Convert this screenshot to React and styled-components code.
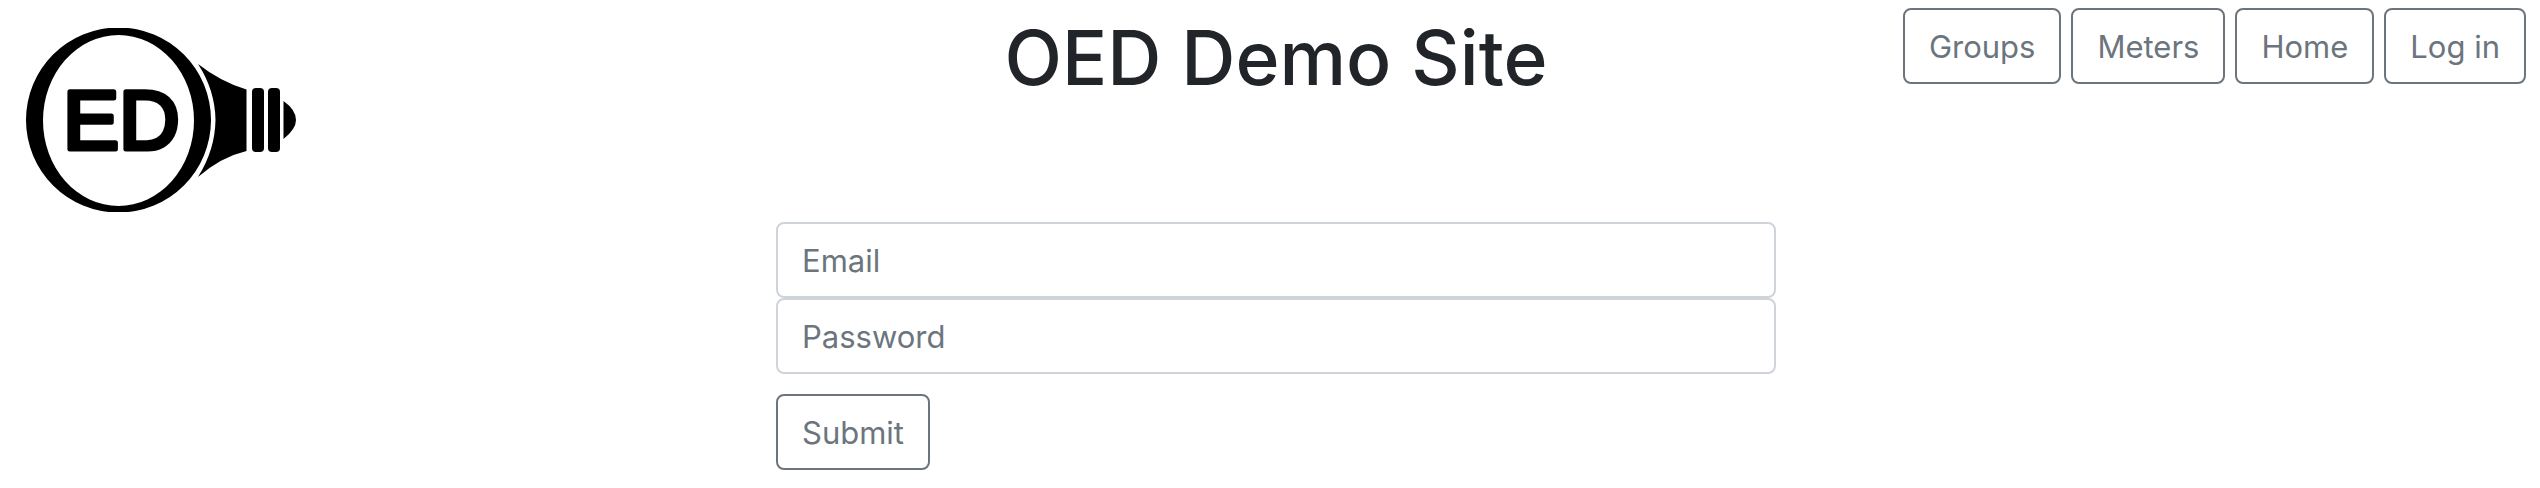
import React from 'react';
import styled, { createGlobalStyle } from 'styled-components';

const GlobalStyle = createGlobalStyle`
  *, *::before, *::after { box-sizing: border-box; }
  body {
    margin: 0;
    background: #fff;
    color: #212529;
    font-family: Inter, "Liberation Sans", sans-serif;
    font-size: 31px;
    line-height: 48px;
  }
`;

const Page = styled.div`
  padding: 8px 14px 18px 26px;
`;

const Header = styled.header`
  display: grid;
  grid-template-columns: 1fr auto 1fr;
  align-items: start;
`;

const LogoLink = styled.a`
  display: block;
  justify-self: start;
  margin-top: 20px;
`;

const LogoImage = styled.svg`
  display: block;
  width: 270px;
  height: 184px;
`;

const Title = styled.h1`
  margin: 0;
  font-size: 75px;
  line-height: 100px;
  font-weight: 500;
  white-space: nowrap;
`;

const Nav = styled.nav`
  display: flex;
  justify-content: flex-end;
  gap: 10px;
`;

const Button = styled.button`
  height: 76px;
  padding: 2px 24px 0;
  border: 2px solid #6c757d;
  border-radius: 8px;
  background: transparent;
  color: #6c757d;
  font: inherit;
  white-space: nowrap;
  cursor: pointer;
`;

const LoginForm = styled.form`
  display: flex;
  flex-direction: column;
  align-items: flex-start;
  width: 40%;
  margin: 10px auto 0;
`;

const Field = styled.input`
  width: 100%;
  height: 76px;
  padding: 0 24px;
  border: 2px solid #ced4da;
  border-radius: 8px;
  background: #fff;
  color: #495057;
  font: inherit;

  &::placeholder {
    color: #6c757d;
    opacity: 1;
  }
`;

const SubmitButton = styled(Button)`
  margin-top: 20px;
`;

const pages = ['Groups', 'Meters', 'Home', 'Log in'];

function Logo() {
  return (
    <LogoImage viewBox="26 28 270 184" role="img" aria-label="Logo">
      <path
        fillRule="evenodd"
        d="M118.500 27.500A92.500 92.500 0 0 1 118.500 212.500A92.500 92.500 0 0 1 118.500 27.500ZM118.500 35A75.500 85.500 0 0 0 118.500 206A75.500 85.500 0 0 0 118.500 35Z"
      />
      <path d="M198 64Q221 82 246.500 89.500V151Q221 157 198 177Q215 150 215.500 120Q215 90 198 64Z" />
      <rect x="252" y="88" width="12" height="64" rx="4" />
      <rect x="268" y="88" width="12" height="64" rx="4" />
      <path d="M283.500 101Q296 110 296 120Q296 129 283.500 139Z" />
      <text
        x="63"
        y="149"
        fontFamily="'Liberation Sans', Arial, sans-serif"
        fontSize="84"
        fontWeight="400"
        stroke="#000"
        strokeWidth="5"
        strokeLinejoin="round"
      >
        ED
      </text>
    </LogoImage>
  );
}

export default function App() {
  return (
    <>
      <GlobalStyle />
      <Page>
        <Header>
          <LogoLink href="#">
            <Logo />
          </LogoLink>
          <Title>OED Demo Site</Title>
          <Nav>
            {pages.map((page) => (
              <Button key={page} type="button">{page}</Button>
            ))}
          </Nav>
        </Header>
        <LoginForm onSubmit={(event) => event.preventDefault()}>
          <Field type="email" placeholder="Email" aria-label="Email" />
          <Field type="password" placeholder="Password" aria-label="Password" />
          <SubmitButton type="submit">Submit</SubmitButton>
        </LoginForm>
      </Page>
    </>
  );
}
